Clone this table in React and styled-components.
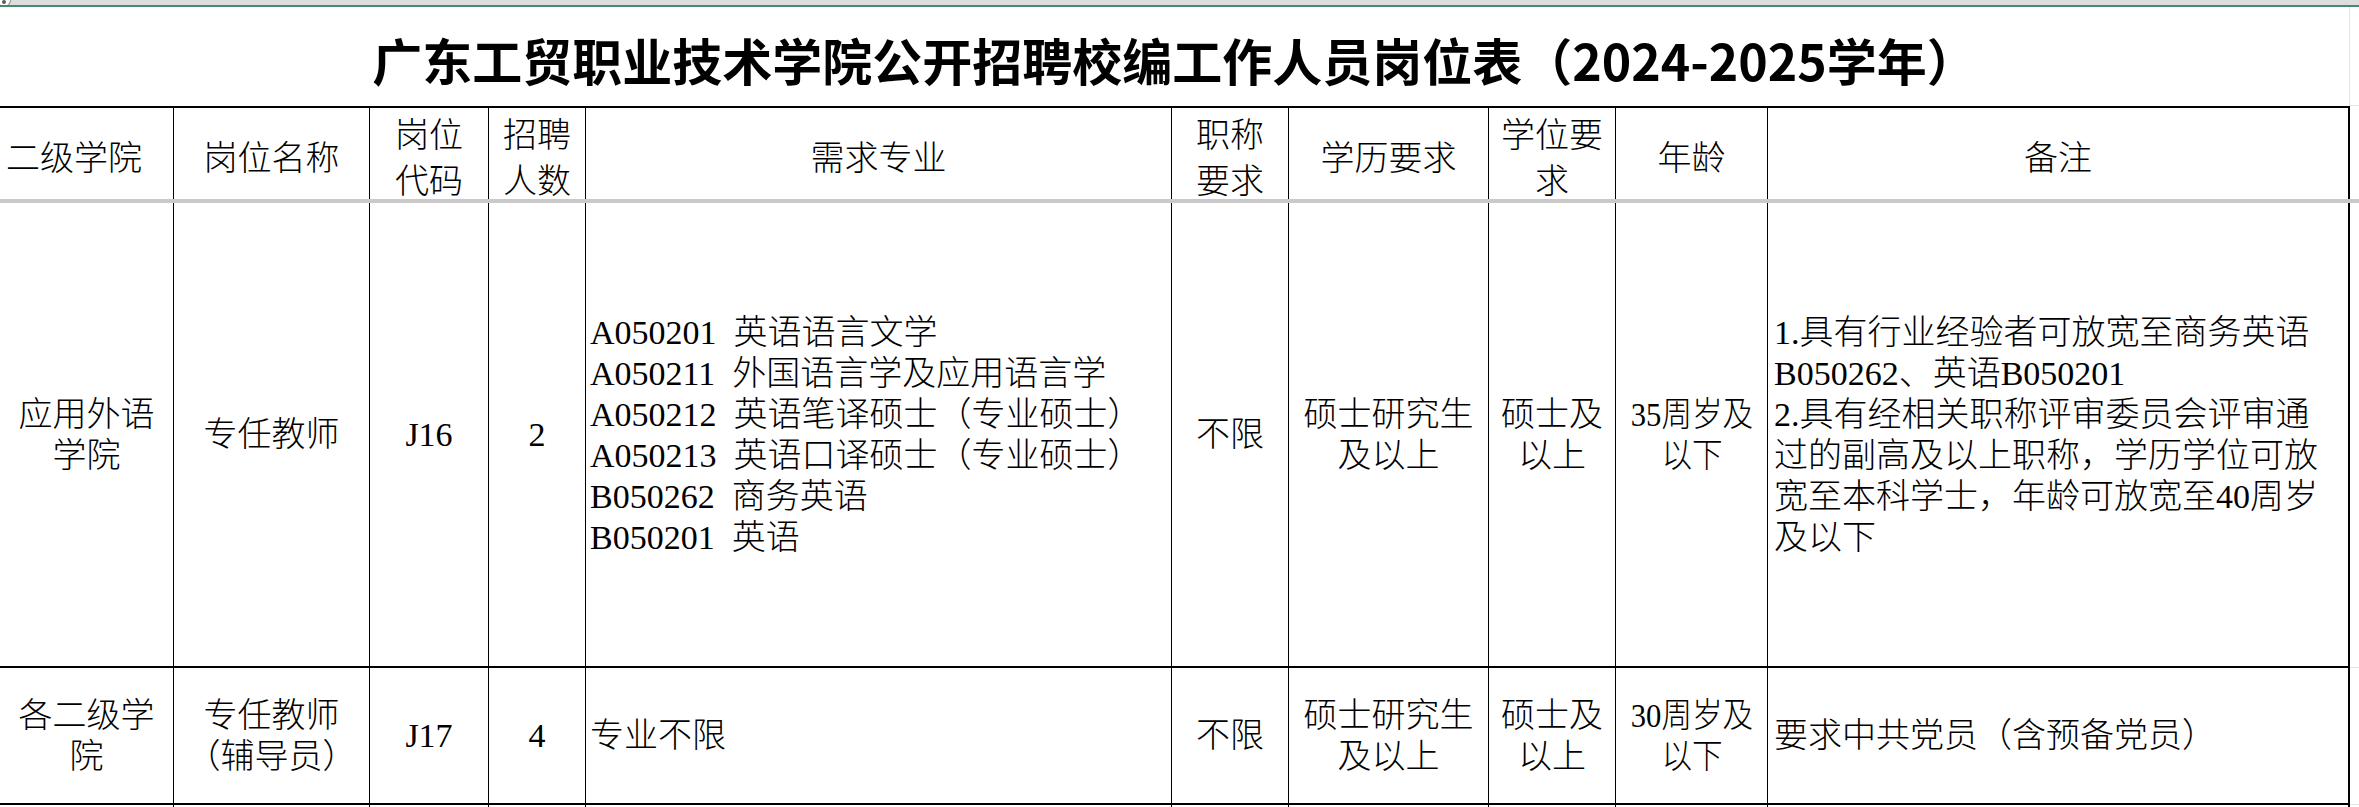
import React from 'react';
import styled, { createGlobalStyle } from 'styled-components';

const GlobalStyle = createGlobalStyle`
  html, body { margin: 0; padding: 0; background: #ffffff; }
  body { width: 2359px; height: 807px; overflow: hidden; }
  #root { width: 2359px; height: 807px; }
`;

const COLUMNS = [174, 196, 119, 97, 586, 117, 200, 127, 152, 582];
const TEMPLATE = COLUMNS.map((w) => `${w}px`).join(' ') + ' 1fr';
const BODY_FONT = `"Liberation Serif", "Noto Sans CJK SC", serif`;

const Sheet = styled.div`
  width: 2359px;
  height: 807px;
  overflow: hidden;
  background: #ffffff;
  display: flex;
  flex-direction: column;
`;

const TopStrip = styled.div`
  position: relative;
  flex: none;
  height: 5px;
  background: #dcdedd;
  overflow: hidden;
`;

const CornerBadge = styled.svg`
  position: absolute;
  left: -4px;
  top: -8px;
`;

const GreenRule = styled.div`
  flex: none;
  height: 2px;
  background: #4a896c;
`;

const Row = styled.div`
  display: grid;
  grid-template-columns: ${TEMPLATE};
  flex: ${(p) => (p.$h ? 'none' : '1')};
  height: ${(p) => (p.$h ? `${p.$h}px` : 'auto')};
`;

const TitleCell = styled.h1`
  grid-column: 1 / span 10;
  margin: 0;
  box-sizing: border-box;
  display: flex;
  align-items: center;
  justify-content: center;
  padding-top: 4px;
  border-right: 1px solid #e4e4e4;
  font-family: "Noto Sans CJK SC", sans-serif;
  font-weight: 700;
  font-size: 50px;
  line-height: 60px;
  color: #000;
  white-space: nowrap;
`;

const Gutter = styled.div`
  box-sizing: border-box;
  border-bottom: ${(p) => (p.$line ? '1px solid #e4e4e4' : '0')};
`;

const Cell = styled.div`
  box-sizing: border-box;
  min-width: 0;
  display: flex;
  flex-direction: column;
  justify-content: center;
  align-items: ${(p) => (p.$align === 'left' ? 'flex-start' : 'center')};
  text-align: ${(p) => (p.$align === 'left' ? 'left' : 'center')};
  padding: ${(p) => p.$pt ?? 0}px ${(p) => p.$pr ?? p.$px ?? 6}px 0 ${(p) => p.$px ?? 6}px;
  border-right: ${(p) => (p.$edge ? 2 : 1)}px solid #000;
  border-top: ${(p) => (p.$top ? '2px solid #000' : '0')};
  border-bottom: ${(p) => (p.$bottom ? '2px solid #000' : '0')};
  font-family: ${BODY_FONT};
  font-weight: 300;
  font-size: 34px;
  line-height: ${(p) => p.$lh ?? 41}px;
  color: #000;
`;

const Separator = styled.div`
  flex: none;
  height: 4px;
  background: #c9c9c9;
`;

const Line = styled.div`
  white-space: nowrap;
`;

const MajorCode = styled.span`
  display: inline-block;
  margin-right: 17px;
`;

const NarrowLine = styled.div`
  white-space: nowrap;
  transform: scaleX(0.9);
  transform-origin: center;
`;

const headers = [
  { text: '二级学院', align: 'left', px: 6 },
  { text: '岗位名称' },
  { text: '岗位代码', px: 9 },
  { text: '招聘人数', px: 4 },
  { text: '需求专业' },
  { text: '职称要求', px: 8 },
  { text: '学历要求' },
  { text: '学位要求', px: 6 },
  { text: '年龄' },
  { text: '备注' },
];

const rows = [
  {
    h: 465,
    college: '应用外语学院',
    post: '专任教师',
    code: 'J16',
    count: '2',
    majors: [
      ['A050201', '英语语言文学'],
      ['A050211', '外国语言学及应用语言学'],
      ['A050212', '英语笔译硕士（专业硕士）'],
      ['A050213', '英语口译硕士（专业硕士）'],
      ['B050262', '商务英语'],
      ['B050201', '英语'],
    ],
    title: '不限',
    edu: '硕士研究生及以上',
    degree: '硕士及以上',
    age: ['35周岁及', '以下'],
    notes: [
      '1.具有行业经验者可放宽至商务英语B050262、英语B050201',
      '2.具有经相关职称评审委员会评审通过的副高及以上职称，学历学位可放宽至本科学士，年龄可放宽至40周岁及以下',
    ],
  },
  {
    h: 137,
    college: '各二级学院',
    post: '专任教师（辅导员）',
    code: 'J17',
    count: '4',
    majors: [['', '专业不限']],
    title: '不限',
    edu: '硕士研究生及以上',
    degree: '硕士及以上',
    age: ['30周岁及', '以下'],
    notes: ['要求中共党员（含预备党员）'],
  },
];

export default function App() {
  return (
    <>
      <GlobalStyle />
      <Sheet>
        <TopStrip>
          <CornerBadge width="16" height="16" viewBox="0 0 16 16">
            <circle cx="8" cy="8" r="6.5" fill="#ffffff" stroke="#9aa09d" strokeWidth="1.2" />
            <circle cx="8" cy="10" r="2" fill="#5a5f5c" />
          </CornerBadge>
        </TopStrip>
        <GreenRule />

        <Row $h={99}>
          <TitleCell>广东工贸职业技术学院公开招聘校编工作人员岗位表（2024-2025学年）</TitleCell>
          <Gutter $line />
        </Row>

        <Row $h={93}>
          {headers.map((h, i) => (
            <Cell
              key={h.text}
              $top
              $pt={5}
              $edge={i === headers.length - 1}
              $align={h.align}
              $px={h.px}
              $lh={46}
            >
              {h.text}
            </Cell>
          ))}
          <Gutter />
        </Row>

        <Separator />

        {rows.map((r) => (
          <Row key={r.code} $h={r.h}>
            <Cell $bottom>{r.college}</Cell>
            <Cell $bottom>{r.post}</Cell>
            <Cell $bottom>{r.code}</Cell>
            <Cell $bottom $px={4}>{r.count}</Cell>
            <Cell $bottom $align="left" $px={4}>
              {r.majors.map(([code, name]) => (
                <Line key={code + name}>
                  {code && <MajorCode>{code}</MajorCode>}
                  {name}
                </Line>
              ))}
            </Cell>
            <Cell $bottom>{r.title}</Cell>
            <Cell $bottom>{r.edu}</Cell>
            <Cell $bottom>{r.degree}</Cell>
            <Cell $bottom $px={0}>
              {r.age.map((a) => (
                <NarrowLine key={a}>{a}</NarrowLine>
              ))}
            </Cell>
            <Cell $bottom $edge $align="left" $px={6} $pr={18}>
              {r.notes.map((n) => (
                <div key={n}>{n}</div>
              ))}
            </Cell>
            <Gutter $line />
          </Row>
        ))}

        <Row>
          {COLUMNS.map((w, i) => (
            <Cell key={w + '-' + i} $edge={i === COLUMNS.length - 1} />
          ))}
          <Gutter />
        </Row>
      </Sheet>
    </>
  );
}
